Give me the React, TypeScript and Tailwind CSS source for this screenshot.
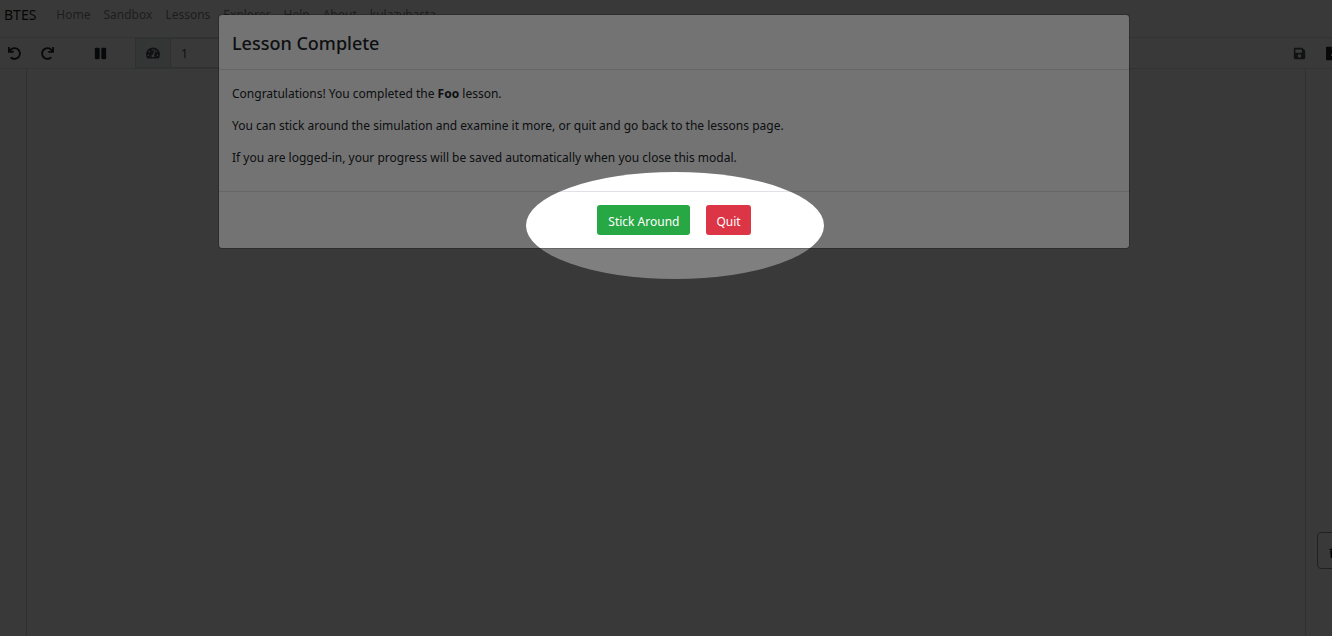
import React from "react";
import { FaUndo, FaRedo, FaPause, FaTachometerAlt, FaSave, FaFileExport, FaTrash } from "react-icons/fa";

const links = ["Home", "Sandbox", "Lessons", "Explorer", "Help", "About", "kulazybasta"];

function Navbar() {
  return (
    <nav className="flex h-[37px] items-center gap-[13px] bg-white px-1 pb-[7px] text-xs text-black/50">
      <a href="#" className="mr-[7px] text-sm text-black/90">BTES</a>
      {links.map((label) => (
        <a key={label} href="#">{label}</a>
      ))}
    </nav>
  );
}

function Toolbar() {
  return (
    <div className="flex h-8 items-center border-y border-[#dee2e6] bg-white text-[#212529]">
      <button aria-label="Undo" className="ml-2"><FaUndo size={13} /></button>
      <button aria-label="Redo" className="ml-5"><FaRedo size={13} /></button>
      <button aria-label="Pause" className="ml-10"><FaPause size={13} /></button>
      <label htmlFor="speed" className="ml-7 flex h-full w-9 items-center justify-center border border-[#ced4da] bg-[#e9ecef] text-[#495057]">
        <FaTachometerAlt size={14} />
      </label>
      <input id="speed" defaultValue="1" className="h-full w-24 border-y border-[#ced4da] bg-white px-2.5 text-xs text-[#495057]" />
      <button aria-label="Save" className="ml-auto opacity-80"><FaSave size={13} /></button>
      <button aria-label="Export" className="mr-[7px] ml-5"><FaFileExport size={15} /></button>
    </div>
  );
}

function LessonModal() {
  return (
    <section role="dialog" aria-labelledby="modal-title" className="mx-auto mt-3.5 max-w-[912px] rounded border border-black/20 bg-white bg-clip-padding text-xs leading-5 text-[#212529]">
      <header className="border-b border-[#dee2e6] px-[13px] pt-3.5 pb-3">
        <h1 id="modal-title" className="text-lg leading-7 font-medium">Lesson Complete</h1>
      </header>
      <div className="flex flex-col gap-3 px-[13px] pt-3.5 pb-[23px]">
        <p>Congratulations! You completed the <strong>Foo</strong> lesson.</p>
        <p>You can stick around the simulation and examine it more, or quit and go back to the lessons page.</p>
        <p>If you are logged-in, your progress will be saved automatically when you close this modal.</p>
      </div>
      <footer className="flex justify-center gap-4 border-t border-[#dee2e6] py-[13px] text-white">
        <button className="h-[30px] rounded-[3px] bg-[#28a745] px-[11px] pt-[3px]">Stick Around</button>
        <button className="h-[30px] rounded-[3px] bg-[#dc3545] px-2.5 pt-[3px]">Quit</button>
      </footer>
    </section>
  );
}

export default function App() {
  return (
    <div className="relative min-h-screen overflow-hidden bg-white font-['Noto_Sans',sans-serif]">
      <div className="-mr-4 flex min-h-screen flex-col">
        <Navbar />
        <Toolbar />
        <main className="flex flex-1">
          <div className="w-[27px] border-r border-[#ced4da]" />
          <div className="flex-1" />
          <div className="flex w-[43px] flex-col items-end justify-end border-l border-[#ced4da] pb-[67px]">
            <button aria-label="Delete" className="flex h-[37px] w-[31px] items-center justify-center rounded border border-[#8c959d] pt-1 pl-0.5 text-black">
              <FaTrash size={10} />
            </button>
          </div>
        </main>
      </div>
      <div className="absolute inset-y-0 left-0 -right-4 bg-black/50">
        <LessonModal />
      </div>
      <div className="pointer-events-none absolute inset-y-0 left-0 -right-[18px] flex justify-center overflow-hidden">
        <div className="mt-[172px] h-[107px] w-[298px] rounded-[50%] shadow-[0_0_0_2000px_rgba(0,0,0,0.55)]" />
      </div>
    </div>
  );
}
